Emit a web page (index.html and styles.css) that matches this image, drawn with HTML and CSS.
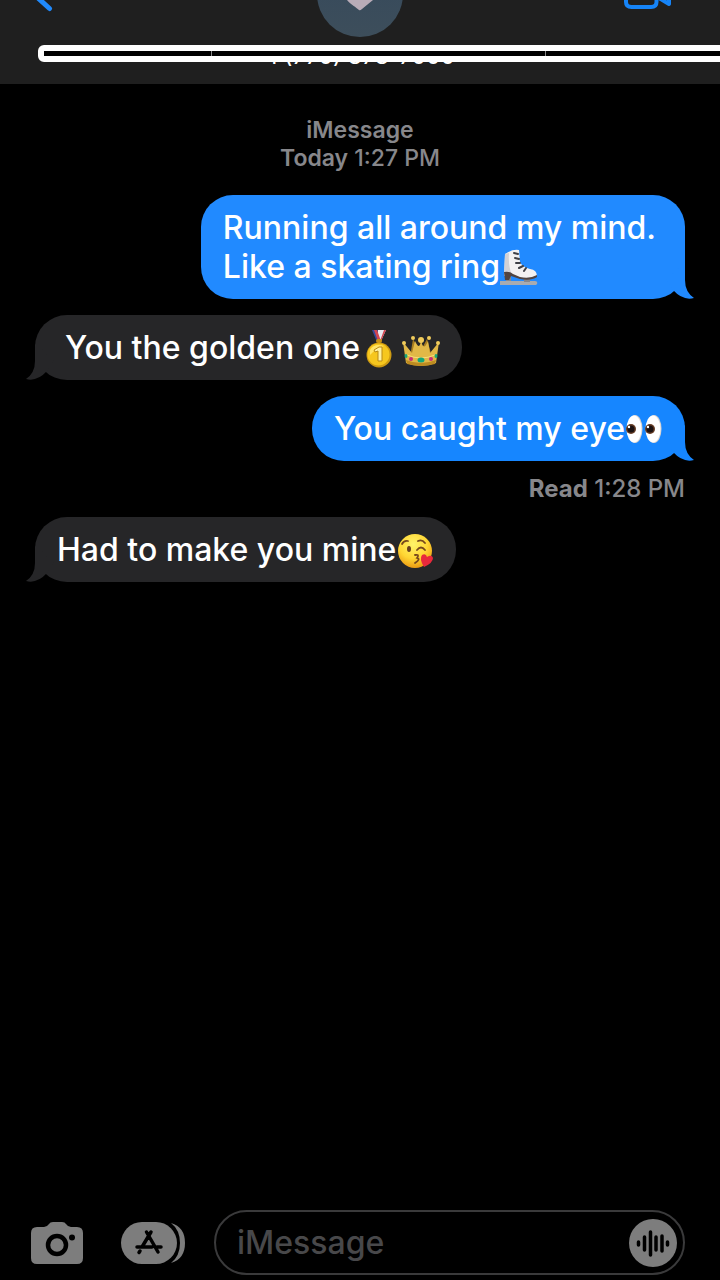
FILE: index.html
```
<!DOCTYPE html>
<html lang="en">
<head>
  <meta charset="UTF-8">
  <meta name="viewport" content="width=device-width, initial-scale=1.0">
  <title>iMessage</title>
  <link rel="stylesheet" href="styles.css">
</head>
<body>
  <header class="header">
    <button class="icon-button back" type="button" aria-label="Back">
      <svg width="20" height="14" viewBox="35 0 20 14"><path d="M38-2 49.500 8.500" fill="none" stroke="#2089fb" stroke-width="5" stroke-linecap="round"/></svg>
    </button>
    <div class="contact">
      <svg width="86" height="37" viewBox="0 0 86 37">
        <defs>
          <linearGradient id="avatar" x1="0" y1="0" x2="0" y2="1">
            <stop offset="0" stop-color="#34485c"/>
            <stop offset="1" stop-color="#3d4e5b"/>
          </linearGradient>
        </defs>
        <circle cx="43" cy="-6" r="43" fill="url(#avatar)"/>
        <path d="M30 0C34 5 39 7 42 10Q43 11 45 9L56 0V-5H30Z" fill="#b9acb8"/>
      </svg>
      <span class="number">+1 (770) 373-7000</span>
    </div>
    <button class="icon-button video" type="button" aria-label="Video call">
      <svg width="50" height="14" viewBox="623 0 50 14"><g fill="none" stroke="#1684f7" stroke-width="4" stroke-linejoin="round"><path d="M626-6V2Q626 7 631.500 7H651Q656.500 7 656.500 2V-6"/><path d="M659-2 669 4V-5"/></g></svg>
    </button>
    <div class="strip"></div>
  </header>

  <main class="messages">
    <p class="stamp"><b>iMessage</b><br><b>Today</b> 1:27 PM</p>

    <div class="bubble sent wide">
      Running all around my mind.<br>Like a skating ring<svg class="emoji" role="img" aria-label="ice skate" viewBox="0 0 38 38">
        <path d="M0 32H35Q38 32 37 35L36 36H0Z" fill="#a8abb0"/>
        <path d="M5 26H11V32H6ZM24 29H30V33H24Z" fill="#85878d"/>
        <path d="M5 5Q12 0 19 1L20 13Q22 18 30 20Q37 21 37 27Q31 31 20 29L11 26 4 27Z" fill="#f3f1f1"/>
        <path d="M5 5 9 4Q8 17 12 26L4 27Z" fill="#d2d1d5"/>
        <path d="M4 23Q10 22 13 25L20 28Q30 30 37 26V28Q31 32 20 30L11 27 9 31H5Z" fill="#514441"/>
        <path d="M14 4 18 5M15 9 19 10M16 14 20 14M19 19 23 17M24 22 26 19" stroke="#3f4046" stroke-width="2" stroke-linecap="round"/>
      </svg>
      <svg class="tail" viewBox="0 0 40 40"><path d="M29 2V19Q29 31 38 37Q27 40 17 29L10 18Z" fill="currentColor"/></svg>
    </div>

    <div class="bubble received spaced">
      You the golden one<svg class="emoji" role="img" aria-label="gold medal" viewBox="0 0 38 38">
        <path d="M12 0H18L22 8 20 12H17Z" fill="#354a9c"/>
        <path d="M18 0H26L21 11H18Z" fill="#e9e9f1"/>
        <path d="M14 0H17L21 11H18ZM24 0H26L21 11H20Z" fill="#d34550"/>
        <rect x="16" y="9" width="6" height="4" rx="2" fill="#c99116"/>
        <circle cx="19" cy="25" r="12.500" fill="#ce9b12"/>
        <circle cx="18.500" cy="24.500" r="11" fill="#f6c71e"/>
        <path d="M10 20Q14 13 24 16Q17 17 10 25Z" fill="#ffe568"/>
        <path d="M14 20 19 17H22V31H18V21L15 22Z" fill="#fff2a2" stroke="#b88914"/>
      </svg><svg class="emoji" role="img" aria-label="crown" viewBox="0 0 38 38">
        <path d="M8 27 11 9 18 22 25 9 30 27Z" fill="#a77c20"/>
        <path d="M1 12 10 23 13 11Q18 22 19 9Q21 23 26 11L28 23 37 12 34 33Q19 39 4 33Z" fill="#e1b847"/>
        <path d="M4 30Q19 36 34 30L33 34Q19 38 5 34Z" fill="#bd8b20"/>
        <path d="M5 25Q19 31 33 25" fill="none" stroke="#f7dc7b"/>
        <g fill="#f0cb5b"><circle cx="2" cy="13" r="2"/><circle cx="11" cy="8" r="2"/><circle cx="19" cy="10" r="3"/><circle cx="27" cy="8" r="2"/><circle cx="36" cy="13" r="2"/></g>
        <ellipse cx="19" cy="30" rx="3.500" ry="2.500" fill="#12a777"/>
        <circle cx="9" cy="29" r="2" fill="#c52e75"/><circle cx="29" cy="29" r="2" fill="#c52e75"/>
        <ellipse cx="4" cy="26" rx="1.500" ry="2" fill="#16a778"/><ellipse cx="34" cy="26" rx="1.500" ry="2" fill="#16a778"/>
      </svg>
      <svg class="tail" viewBox="0 0 40 40"><path d="M29 2V19Q29 31 38 37Q27 40 17 29L10 18Z" fill="currentColor"/></svg>
    </div>

    <div class="bubble sent bright">
      You caught my eye<svg class="emoji" role="img" aria-label="eyes" viewBox="0 0 38 38">
        <ellipse cx="10" cy="18" rx="7.500" ry="14" fill="#d7d2d0"/><ellipse cx="9" cy="18" rx="7.500" ry="13.500" fill="#fff"/>
        <ellipse cx="29" cy="18" rx="7.500" ry="14" fill="#d7d2d0"/><ellipse cx="28" cy="18" rx="7.500" ry="13.500" fill="#fff"/>
        <circle cx="6" cy="18" r="5" fill="#653c25"/><circle cx="6" cy="18" r="3.500" fill="#1c1212"/><circle cx="4" cy="16" r="1.200" fill="#fff"/>
        <circle cx="25" cy="18" r="5" fill="#653c25"/><circle cx="25" cy="18" r="3.500" fill="#1c1212"/><circle cx="23" cy="16" r="1.200" fill="#fff"/>
      </svg>
      <svg class="tail" viewBox="0 0 40 40"><path d="M29 2V19Q29 31 38 37Q27 40 17 29L10 18Z" fill="currentColor"/></svg>
    </div>
    <p class="receipt"><b>Read</b> 1:28 PM</p>

    <div class="bubble received">
      Had to make you mine<svg class="emoji" role="img" aria-label="face blowing a kiss" viewBox="0 0 38 38">
        <defs>
          <radialGradient id="face" cx="0.450" cy="0.300" r="0.700">
            <stop offset="0" stop-color="#fff36a"/>
            <stop offset="0.600" stop-color="#ffd633"/>
            <stop offset="1" stop-color="#eb9b13"/>
          </radialGradient>
        </defs>
        <circle cx="19" cy="19" r="17" fill="url(#face)"/>
        <g fill="none" stroke="#76481d" stroke-width="1.800" stroke-linecap="round">
          <path d="M6 12Q8 8 12 9M22 9Q26 7 29 11M21 18Q25 13 29 18M19 23Q24 22 21 26Q25 27 19 31"/>
        </g>
        <ellipse cx="13" cy="17" rx="2" ry="3" fill="#69401d"/>
        <path d="M28 35Q23 27 26 23Q30 21 31 25Q36 22 37 26Q37 31 28 35Z" fill="#e8293c"/>
      </svg>
      <svg class="tail" viewBox="0 0 40 40"><path d="M29 2V19Q29 31 38 37Q27 40 17 29L10 18Z" fill="currentColor"/></svg>
    </div>
  </main>

  <form class="composer">
    <button class="icon-button" type="button" aria-label="Camera">
      <svg width="52" height="42" viewBox="0 0 52 42">
        <path d="M6 5H13Q16 5 18 2Q19 0 22 0H31Q34 0 35 2Q37 5 40 5H46Q52 5 52 11V36Q52 42 46 42H6Q0 42 0 36V11Q0 5 6 5Z" fill="#7d7d7d"/>
        <circle cx="26" cy="23" r="9" fill="none" stroke="#000" stroke-width="4.500"/>
        <circle cx="41" cy="15.500" r="3" fill="#000"/>
      </svg>
    </button>
    <button class="icon-button apps" type="button" aria-label="Apps">
      <svg width="64" height="42" viewBox="0 0 64 42">
        <path d="M50 1Q64 5 64 21T50 41Q59 34 59 21T50 1Z" fill="#7d7d7d"/>
        <rect width="56" height="42" rx="21" fill="#7d7d7d"/>
        <g fill="none" stroke="#000" stroke-width="3.500" stroke-linecap="round">
          <path d="M25.500 10 37 30M30 10 21 25M16 25H31M36 25H40M19 29 18 30.500"/>
        </g>
      </svg>
    </button>
    <div class="field">
      <input type="text" placeholder="iMessage" aria-label="iMessage">
      <button class="icon-button" type="button" aria-label="Record audio">
        <svg width="48" height="48" viewBox="0 0 48 48">
          <circle cx="24" cy="24" r="24" fill="#7d7d7d"/>
          <g stroke="#000" stroke-width="3.500" stroke-linecap="round"><path d="M9.500 23V26M15.500 18V31M21.500 13V36M27 18V31M33 17V32M38.500 23V26"/></g>
        </svg>
      </button>
    </div>
  </form>
</body>
</html>
```
FILE: styles.css
```
* {
  box-sizing: border-box;
}

body {
  margin: 0;
  min-height: 100vh;
  display: flex;
  flex-direction: column;
  background-color: #000;
  color: #fff;
  font-family: Inter, "Liberation Sans", sans-serif;
  overflow-x: hidden;
}

p {
  margin: 0;
}

b {
  font-weight: 600;
}

svg {
  display: block;
}

.icon-button {
  padding: 0;
  border: 0;
  background: none;
  cursor: pointer;
}

/* header */
.header {
  position: relative;
  display: grid;
  grid-template-columns: 1fr auto 1fr;
  align-items: start;
  height: 84px;
  padding: 0 47px 0 35px;
  background-color: #1f1f1f;
  overflow: hidden;
}

.back {
  justify-self: start;
}

.video {
  justify-self: end;
}

.contact {
  display: flex;
  flex-direction: column;
  align-items: center;
  gap: 5px;
  margin-left: 12px;
}

.number {
  padding-right: 12px;
  font-size: 23px;
  line-height: 28px;
}

.strip {
  position: absolute;
  top: 45px;
  left: 38px;
  right: -20px;
  height: 17px;
  border: 6px solid #fff;
  border-radius: 6px;
  background: linear-gradient(#888, #888) 167px 0 / 1px 100% no-repeat,
    linear-gradient(#888, #888) 501px 0 / 1px 100% no-repeat, #000;
}

/* conversation */
.messages {
  flex: 1;
  display: flex;
  flex-direction: column;
  align-items: flex-start;
  gap: 16px;
  padding: 32px 35px;
}

.stamp,
.receipt {
  color: #87878b;
  font-size: 23px;
  font-weight: 500;
}

.stamp {
  align-self: center;
  margin-bottom: 7px;
  line-height: 28px;
  text-align: center;
}

.receipt {
  align-self: flex-end;
  font-size: 24px;
  line-height: 24px;
}

.receipt b {
  font-weight: 700;
}

.bubble {
  position: relative;
  padding: 13px 22px;
  border-radius: 32px;
  font-size: 32px;
  font-weight: 500;
  line-height: 39px;
}

.sent {
  align-self: flex-end;
  background-color: #218aff;
}

.wide {
  padding-right: 29px;
}

.bright {
  background-color: #1686ff;
}

.received {
  background-color: #262628;
}

.spaced {
  padding-left: 30px;
}

.emoji {
  display: inline-block;
  width: 38px;
  height: 38px;
  margin: -4px 0;
  vertical-align: -5px;
}

.emoji + .emoji {
  margin-left: 4px;
}

.tail {
  position: absolute;
  right: -11px;
  bottom: -2px;
  width: 40px;
  height: 40px;
}

.sent .tail {
  color: #218aff;
}

.bright .tail {
  color: #1686ff;
}

.received .tail {
  left: -11px;
  right: auto;
  color: #262628;
  transform: scaleX(-1);
}

/* message box */
.composer {
  display: flex;
  align-items: center;
  padding: 0 35px 5px 31px;
}

.apps {
  margin: 0 29px 0 38px;
}

.field {
  flex: 1;
  display: flex;
  align-items: center;
  min-width: 0;
  height: 65px;
  padding: 0 6px 0 21px;
  border: 2px solid #3a3a3b;
  border-radius: 33px;
}

.field input {
  flex: 1;
  min-width: 0;
  padding: 0;
  border: 0;
  outline: 0;
  background: none;
  color: #fff;
  font: 500 32px/40px Inter, "Liberation Sans", sans-serif;
}

.field input::placeholder {
  color: #48484a;
  opacity: 1;
}
```
